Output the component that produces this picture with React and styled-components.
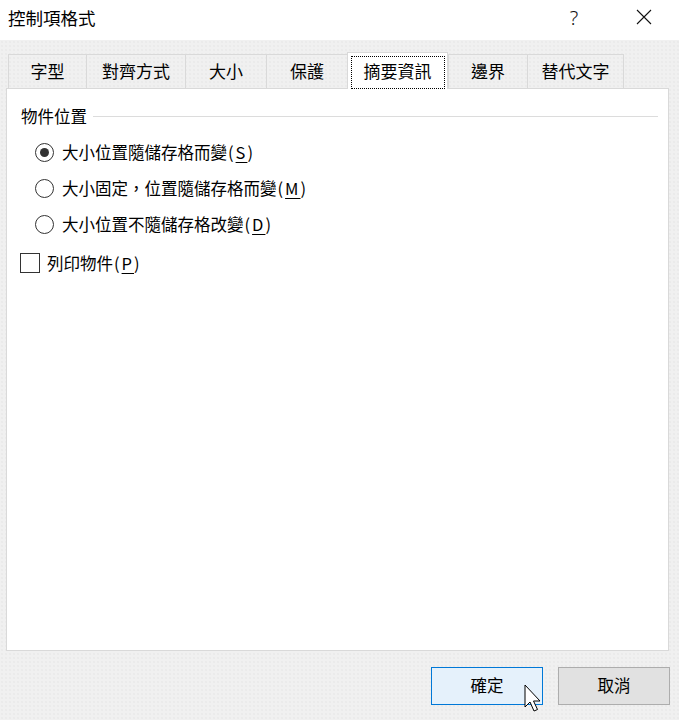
import React from "react"
import styled, { createGlobalStyle } from "styled-components"

const TABS = [
  { label: "字型", width: 78 },
  { label: "對齊方式", width: 99 },
  { label: "大小", width: 81 },
  { label: "保護", width: 81 },
  { label: "摘要資訊", width: 101, active: true },
  { label: "邊界", width: 79 },
  { label: "替代文字", width: 97 },
]

const OPTIONS = [
  { text: "大小位置隨儲存格而變", key: "S", checked: true },
  { text: "大小固定，位置隨儲存格而變", key: "M" },
  { text: "大小位置不隨儲存格改變", key: "D" },
]

const GlobalStyle = createGlobalStyle`
  html, body {
    margin: 0;
    padding: 0;
    width: 679px;
    height: 720px;
    overflow: hidden;
  }
  body {
    font-family: "Noto Sans CJK TC", "Noto Sans", "Liberation Sans", sans-serif;
    color: #000;
  }
`

const Dialog = styled.div`
  position: relative;
  width: 679px;
  height: 720px;
  display: flex;
  flex-direction: column;
  background-color: #f0f0f0;
  background-image: radial-gradient(#e3e3e3 0.6px, transparent 0.8px);
  background-size: 4px 4px;
`

const TitleBar = styled.div`
  height: 40px;
  flex-shrink: 0;
  display: flex;
  align-items: center;
  background: #fff;
  padding-left: 8px;
`

const Title = styled.div`
  flex: 1;
  font-size: 17.5px;
  line-height: 1;
  margin-top: -4px;
`

const TitleButton = styled.div`
  width: 70px;
  height: 40px;
  display: flex;
  align-items: center;
  justify-content: center;
  font-family: "Noto Sans", "Liberation Sans", sans-serif;
  font-size: 20px;
  font-weight: 300;
  color: #111;
  margin-top: -6px;
`

const Body = styled.div`
  flex: 1;
  display: flex;
  flex-direction: column;
  padding: 12px 10px 0 6px;
`

const TabRow = styled.div`
  display: flex;
  align-items: flex-end;
  height: 36px;
  padding-left: 2px;
  position: relative;
  z-index: 1;
`

const Tab = styled.div`
  width: ${p => p.$width}px;
  height: ${p => (p.$active ? 37 : 34)}px;
  margin-bottom: ${p => (p.$active ? -1 : 0)}px;
  box-sizing: border-box;
  display: flex;
  align-items: center;
  justify-content: center;
  padding-bottom: ${p => (p.$active ? 0 : 3)}px;
  font-size: 17px;
  background: ${p => (p.$active ? "#fff" : "transparent")};
  border: 1px solid #d9d9d9;
  border-bottom: none;
  border-right: ${p => (p.$active || p.$last ? "1px solid #d9d9d9" : "none")};
  & + & {
    border-left: ${p => (p.$afterActive ? "none" : "1px solid #d9d9d9")};
  }
`

const FocusLabel = styled.span`
  outline: 1px dotted #000;
  width: 92px;
  height: 31px;
  display: flex;
  align-items: center;
  justify-content: center;
  padding-bottom: 3px;
  box-sizing: border-box;
  margin-top: 2px;
`

const Panel = styled.div`
  flex: 1;
  background: #fff;
  border: 1px solid #d9d9d9;
  padding: 15px 10px 0 14px;
  font-size: 16.5px;
`

const GroupHeader = styled.div`
  display: flex;
  align-items: center;
  height: 24px;
`

const GroupLine = styled.div`
  flex: 1;
  height: 1px;
  background: #dcdcdc;
  margin-left: 6px;
`

const RadioList = styled.div`
  display: flex;
  flex-direction: column;
  padding: 6px 0 0 14px;
`

const OptionRow = styled.label`
  display: flex;
  align-items: center;
  height: 36px;
  gap: 8px;
`

const RadioCircle = styled.span`
  width: 19px;
  height: 19px;
  flex-shrink: 0;
  box-sizing: border-box;
  border: 1px solid #333;
  border-radius: 50%;
  display: flex;
  align-items: center;
  justify-content: center;
  &::after {
    content: "";
    width: 9px;
    height: 9px;
    border-radius: 50%;
    background: ${p => (p.$checked ? "#333" : "transparent")};
  }
`

const CheckRow = styled.label`
  display: flex;
  align-items: center;
  gap: 7px;
  margin-top: 9px;
  margin-left: -1px;
`

const CheckBox = styled.span`
  width: 20px;
  height: 20px;
  flex-shrink: 0;
  box-sizing: border-box;
  border: 1px solid #333;
  background: #fff;
`

const Paren = styled.span`
  letter-spacing: 2px;
  padding-left: 1px;
`

const Accel = styled.span`
  text-decoration: underline;
  text-underline-offset: 3px;
  text-decoration-thickness: 1px;
`

const Footer = styled.div`
  height: 69px;
  flex-shrink: 0;
  display: flex;
  justify-content: flex-end;
  align-items: flex-start;
  gap: 15px;
  padding: 16px 9px 0 0;
  box-sizing: border-box;
`

const Button = styled.div`
  width: 112px;
  height: 38px;
  box-sizing: border-box;
  display: flex;
  align-items: center;
  justify-content: center;
  padding-bottom: 2px;
  font-size: 16.5px;
  border: 1px solid ${p => (p.$primary ? "#0078d7" : "#adadad")};
  background: ${p => (p.$primary ? "#e5f1fb" : "#e1e1e1")};
`

const Cursor = styled.svg`
  position: absolute;
  left: 524px;
  top: 684px;
  width: 18px;
  height: 29px;
`

const CloseIcon = () => (
  <svg width="16" height="16" viewBox="0 0 16 16">
    <path d="M1 1 L15 15 M15 1 L1 15" stroke="#111" strokeWidth="1.1" fill="none" />
  </svg>
)

const Label = ({ text, accel }) => (
  <span>
    {text}
    <Paren>
      (<Accel>{accel}</Accel>)
    </Paren>
  </span>
)

export default function App() {
  const activeIndex = TABS.findIndex(t => t.active)
  return (
    <Dialog>
      <GlobalStyle />
      <TitleBar>
        <Title>控制項格式</Title>
        <TitleButton>?</TitleButton>
        <TitleButton>
          <CloseIcon />
        </TitleButton>
      </TitleBar>
      <Body>
        <TabRow>
          {TABS.map((t, i) => (
            <Tab
              key={t.label}
              $width={t.width}
              $active={t.active}
              $last={i === TABS.length - 1}
              $afterActive={i === activeIndex + 1}
            >
              {t.active ? <FocusLabel>{t.label}</FocusLabel> : t.label}
            </Tab>
          ))}
        </TabRow>
        <Panel>
          <GroupHeader>
            物件位置
            <GroupLine />
          </GroupHeader>
          <RadioList>
            {OPTIONS.map(o => (
              <OptionRow key={o.key}>
                <RadioCircle $checked={o.checked} />
                <Label text={o.text} accel={o.key} />
              </OptionRow>
            ))}
          </RadioList>
          <CheckRow>
            <CheckBox />
            <Label text="列印物件" accel="P" />
          </CheckRow>
        </Panel>
      </Body>
      <Footer>
        <Button $primary>確定</Button>
        <Button>取消</Button>
      </Footer>
      <Cursor viewBox="0 0 18 29">
        <path
          d="M1 1 L1 23 L6 18 L10 27 L13.5 25.5 L9.5 17 L16 17 Z"
          fill="#fff"
          stroke="#000"
          strokeWidth="1"
          strokeLinejoin="miter"
        />
      </Cursor>
    </Dialog>
  )
}
